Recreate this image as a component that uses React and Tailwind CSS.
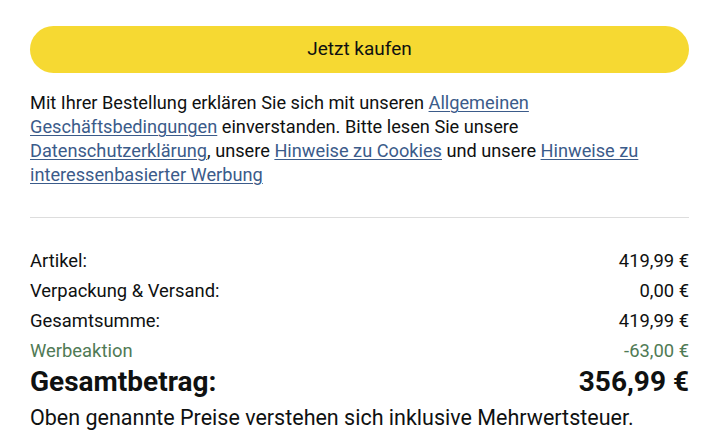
import React from 'react';

// Checkout summary - Jetzt kaufen box

const SummaryRow = ({ label, value, className = '' }) => (
  <div className={`flex items-center justify-between h-[30px] ${className}`}>
    <span>{label}</span>
    <span>{value}</span>
  </div>
);

const Link = ({ children }) => (
  <a href="#" className="text-[#3b5b8a] underline underline-offset-2 decoration-1">
    {children}
  </a>
);

export default function App() {
  return (
    <div
      className="w-[717px] h-[444px] overflow-hidden bg-white text-[#0f1111] pl-[30px] pr-[28px] pt-[26px]"
      style={{ fontFamily: 'Roboto, "Liberation Sans", sans-serif' }}
    >
      {/* Button */}
      <button className="w-full h-[47px] rounded-full bg-[#f6d932] text-[19px] text-[#0f1111]">
        Jetzt kaufen
      </button>

      {/* Terms */}
      <p className="mt-[18px] text-[18.2px] leading-[24px]">
        Mit Ihrer Bestellung erklären Sie sich mit unseren <Link>Allgemeinen Geschäftsbedingungen</Link> einverstanden.
        Bitte lesen Sie unsere <Link>Datenschutzerklärung</Link>, unsere <Link>Hinweise zu Cookies</Link> und
        unsere <Link>Hinweise zu interessenbasierter Werbung</Link>
      </p>

      <div className="mt-[30px] border-t border-[#dddddd]" />

      {/* Totals */}
      <div className="mt-[28px] text-[18.4px]">
        <SummaryRow label="Artikel:" value="419,99 €" />
        <SummaryRow label="Verpackung & Versand:" value="0,00 €" />
        <SummaryRow label="Gesamtsumme:" value="419,99 €" />
        <SummaryRow label="Werbeaktion" value="-63,00 €" className="text-[#507a55]" />
        <div className="flex items-center justify-between h-[32px] text-[28px] font-bold">
          <span>Gesamtbetrag:</span>
          <span>356,99 €</span>
        </div>
      </div>

      <p className="mt-[6px] text-[21.5px] leading-[28px]">
        Oben genannte Preise verstehen sich inklusive Mehrwertsteuer.
      </p>
    </div>
  );
}
